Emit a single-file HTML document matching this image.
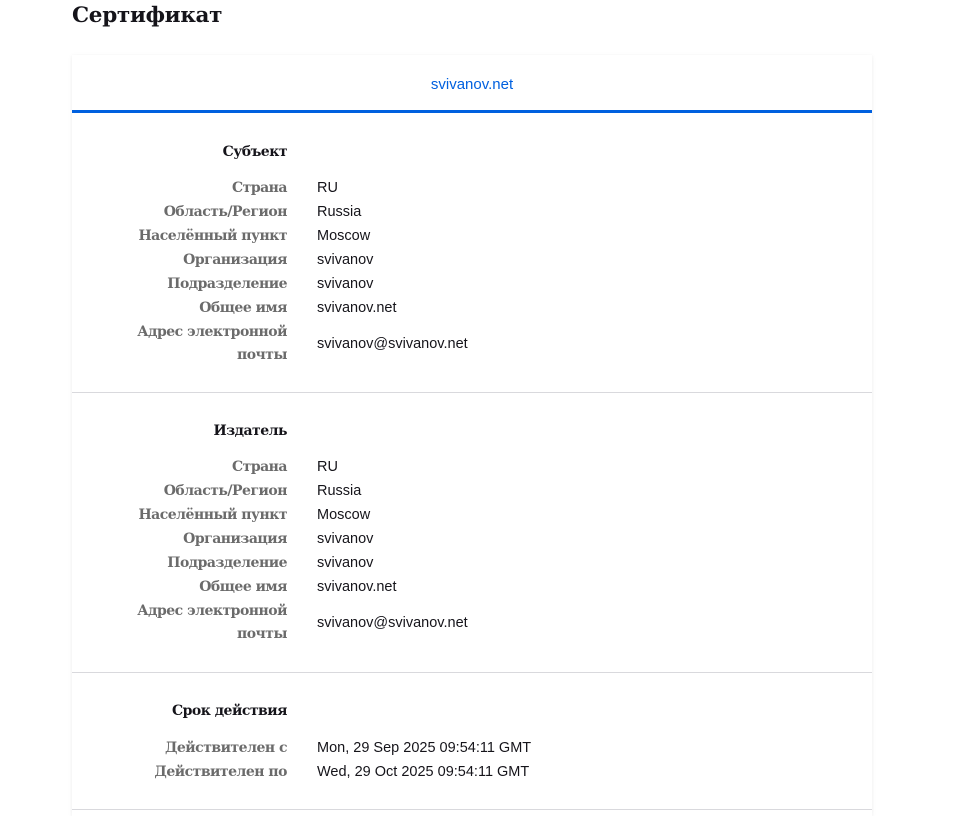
<!DOCTYPE html>
<html><head><meta charset="utf-8"><style>
html,body{margin:0;height:816px;overflow:hidden}
body{background:#fff;width:970px;position:relative;font-family:"Liberation Sans",sans-serif;}
h1{position:absolute;left:72px;top:1px;margin:0;font:bold 21.5px/30px "DejaVu Serif","Liberation Serif",serif;color:#15141a;letter-spacing:-0.3px}
.card{position:absolute;left:72px;top:55px;width:800px;height:761px;background:#fff;box-shadow:0 1px 4px rgba(0,0,0,0.08);}
.tab{position:absolute;left:0;top:0;width:800px;height:55px;border-bottom:3px solid #0060df;text-align:center;line-height:60px;color:#0060df;font-size:15px}
.hr{position:absolute;left:0;width:800px;height:1px;background:#d9d9dd}
.l{position:absolute;right:585px;width:220px;text-align:right;font:bold 14px/22px "DejaVu Serif","Liberation Serif",serif;color:#6b6b6b;white-space:nowrap;letter-spacing:-0.5px;margin-top:1px}
.h{color:#15141a}
.v{position:absolute;left:245px;font-size:14.5px;line-height:22px;color:#15141a;white-space:nowrap;margin-top:1px}
</style></head><body>
<h1>Сертификат</h1>
<div class="card">
<div class="tab">svivanov.net</div>

<div class="l h" style="top:85px">Субъект</div>
<div class="l" style="top:121px">Страна</div><div class="v" style="top:121px">RU</div>
<div class="l" style="top:145px">Область/Регион</div><div class="v" style="top:145px">Russia</div>
<div class="l" style="top:169px">Населённый пункт</div><div class="v" style="top:169px">Moscow</div>
<div class="l" style="top:193px">Организация</div><div class="v" style="top:193px">svivanov</div>
<div class="l" style="top:217px">Подразделение</div><div class="v" style="top:217px">svivanov</div>
<div class="l" style="top:241px">Общее имя</div><div class="v" style="top:241px">svivanov.net</div>
<div class="l" style="top:265px">Адрес электронной</div>
<div class="l" style="top:288px">почты</div><div class="v" style="top:277px">svivanov@svivanov.net</div>
<div class="hr" style="top:337px"></div>

<div class="l h" style="top:364px">Издатель</div>
<div class="l" style="top:400px">Страна</div><div class="v" style="top:400px">RU</div>
<div class="l" style="top:424px">Область/Регион</div><div class="v" style="top:424px">Russia</div>
<div class="l" style="top:448px">Населённый пункт</div><div class="v" style="top:448px">Moscow</div>
<div class="l" style="top:472px">Организация</div><div class="v" style="top:472px">svivanov</div>
<div class="l" style="top:496px">Подразделение</div><div class="v" style="top:496px">svivanov</div>
<div class="l" style="top:520px">Общее имя</div><div class="v" style="top:520px">svivanov.net</div>
<div class="l" style="top:544px">Адрес электронной</div>
<div class="l" style="top:567px">почты</div><div class="v" style="top:556px">svivanov@svivanov.net</div>
<div class="hr" style="top:617px"></div>

<div class="l h" style="top:644px">Срок действия</div>
<div class="l" style="top:681px">Действителен с</div><div class="v" style="top:681px">Mon, 29 Sep 2025 09:54:11 GMT</div>
<div class="l" style="top:705px">Действителен по</div><div class="v" style="top:705px">Wed, 29 Oct 2025 09:54:11 GMT</div>
<div class="hr" style="top:754px"></div>
</div>
</body></html>
